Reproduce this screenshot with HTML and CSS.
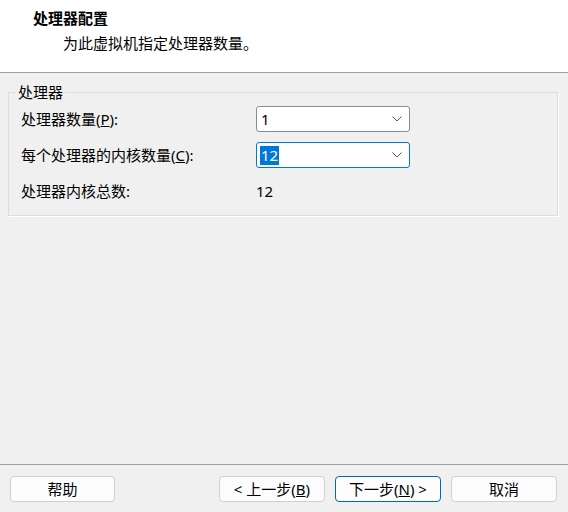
FILE: index.html
```html
<!DOCTYPE html>
<html lang="zh-CN">
<head>
    <meta charset="UTF-8">
    <title>处理器配置</title>
    <link rel="stylesheet" href="styles.css">
</head>
<body>
    <div class="header">
        <div class="title">处理器配置</div>
        <div class="subtitle">为此虚拟机指定处理器数量。</div>
    </div>

    <div class="main">
        <fieldset class="group">
            <legend>处理器</legend>
            <div class="rows">
                <label>处理器数量(<u>P</u>):</label>
                <div class="combo">
                    <span class="value">1</span>
                    <svg width="10" height="6" viewBox="0 0 10 6"><path d="M0.5 0.5 L5 5 L9.5 0.5" fill="none" stroke="#5a5a5a" stroke-width="1"/></svg>
                </div>

                <label>每个处理器的内核数量(<u>C</u>):</label>
                <div class="combo focus">
                    <span class="value selected">12</span>
                    <svg width="10" height="6" viewBox="0 0 10 6"><path d="M0.5 0.5 L5 5 L9.5 0.5" fill="none" stroke="#5a5a5a" stroke-width="1"/></svg>
                </div>

                <label>处理器内核总数:</label>
                <div class="total">12</div>
            </div>
        </fieldset>
    </div>

    <div class="footer">
        <button>帮助</button>
        <div class="nav">
            <button>&lt; 上一步(<u>B</u>)</button>
            <button class="default">下一步(<u>N</u>) &gt;</button>
            <button>取消</button>
        </div>
    </div>
</body>
</html>
```

FILE: styles.css
```css
html, body { margin: 0; height: 100%; }
body {
    font-family: "Noto Sans", "Noto Sans CJK SC", sans-serif;
    font-size: 15px;
    color: #000;
    background: #f0f0f0;
    display: flex;
    flex-direction: column;
    height: 512px;
    overflow: hidden;
}

.header { height: 73px; box-sizing: border-box; background: #fff; border-bottom: 1px solid #a0a0a0; padding-top: 8px; }
.title { font-weight: bold; line-height: 20px; padding-left: 33px; }
.subtitle { line-height: 20px; padding-left: 63px; margin-top: 5px; }

.main { flex: 1; padding: 11px 10px 0 8px; }

.group {
    margin: 0;
    padding: 6px 12px 11px 12px;
    border: 1px solid #dcdcdc;
    box-shadow: 1px 1px 0 #fff;
    min-width: 0;
}
.group legend { line-height: 16px; padding: 0 2px; margin-left: -5px; }

.rows { display: grid; grid-template-columns: 235px 154px; grid-auto-rows: 26px; row-gap: 10px; align-items: center; }
.rows label { line-height: 20px; }

.combo {
    height: 26px;
    box-sizing: border-box;
    background: #fff;
    border: 1px solid #8c8c8c;
    border-radius: 3px;
    display: flex;
    align-items: center;
    justify-content: space-between;
    padding: 0 7px 0 3px;
}
.combo.focus { border-color: #0078d4; }
.combo .value { line-height: 19px; padding: 0 1px; }
.combo .value.selected { background: #0078d7; color: #fff; }
.total { line-height: 20px; }

.footer {
    border-top: 1px solid #a0a0a0;
    padding: 11px 11px 10px 10px;
    display: flex;
    justify-content: space-between;
}
.nav { display: flex; gap: 10px; }
button {
    width: 105px;
    height: 26px;
    font: inherit;
    line-height: 20px;
    padding: 0;
    background: #fdfdfd;
    border: 1px solid #d0d0d0;
    border-radius: 4px;
    color: #000;
}
.nav button { width: 106px; }
button.default { border-color: #0067c0; }
```
